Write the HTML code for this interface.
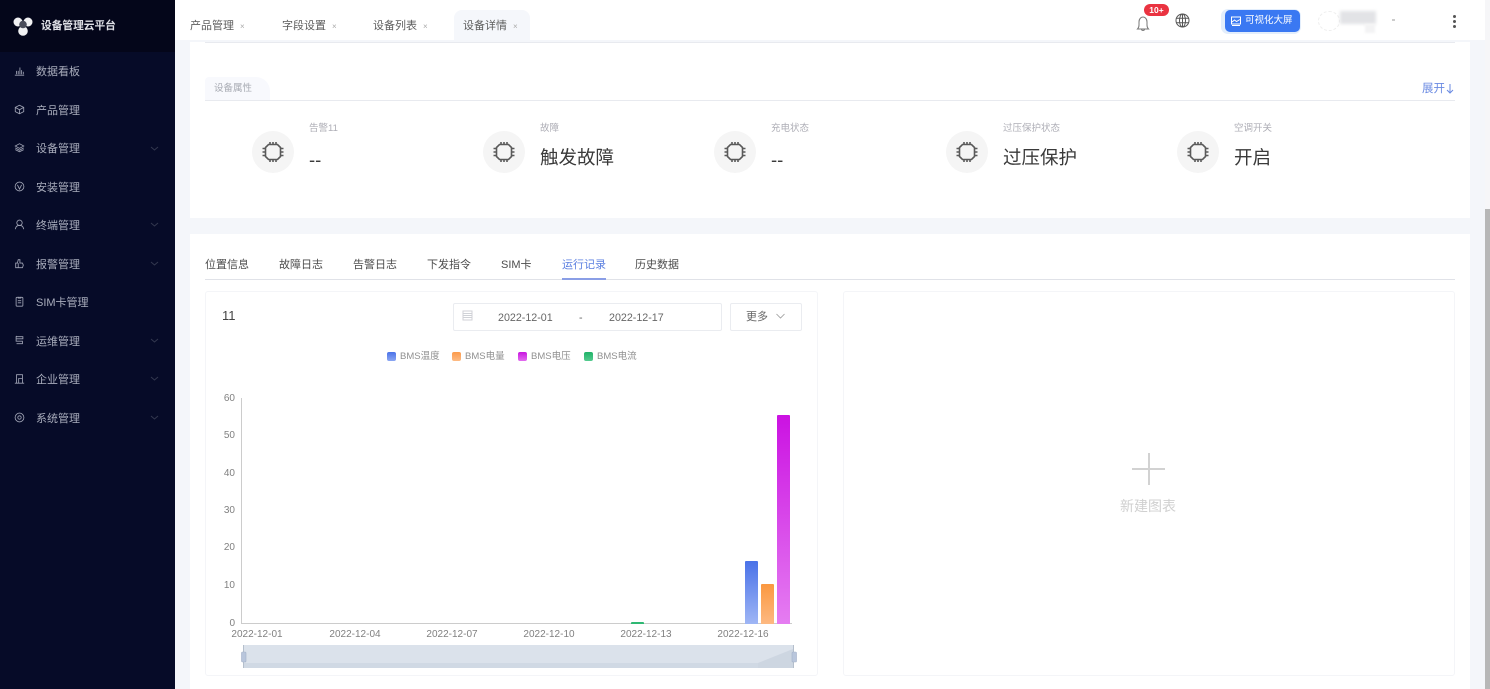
<!DOCTYPE html>
<html lang="zh-CN"><head><meta charset="utf-8"><title>设备管理云平台</title>
<style>
html,body{margin:0;padding:0;width:1490px;height:689px;overflow:hidden;background:#f4f6fa;font-family:"Liberation Sans","Noto Sans CJK SC",sans-serif;color:#333}
.a{position:absolute;white-space:nowrap}
.side{position:absolute;left:0;top:0;width:175px;height:689px;background:#060b28}
.logo{position:absolute;left:0;top:0;width:175px;height:52px;background:#04061a}
.m{position:absolute;left:36px;font-size:11px;line-height:16px;color:#a9adbc}
.ic{position:absolute;left:14px;width:11px;height:11px;fill:none;stroke:#a0a4b5;stroke-width:1}
.ch{position:absolute;left:150px;width:9px;height:5px;fill:none;stroke:#33384f;stroke-width:1}
.tab{position:absolute;top:18px;font-size:11px;line-height:16px;color:#5c5c5c}
.tab i{font-style:normal;font-size:8px;color:#aaa;margin-left:6px}
.sub{position:absolute;top:257px;font-size:11px;line-height:16px;color:#4c4c4c}
.lb{position:absolute;top:123px;font-size:9.5px;line-height:12px;color:#aeaeb6}
.val{position:absolute;top:145px;font-size:18.5px;line-height:26px;color:#3a3a3a}
.dash{top:147px}
.cc{position:absolute;top:131px;width:42px;height:42px;border-radius:50%;background:#f5f5f5}
.cc svg{position:absolute;left:9px;top:9px;width:24px;height:24px;fill:none;stroke:#5a5a5a;stroke-width:1.6}
.y{position:absolute;left:215px;width:20px;text-align:right;font-size:10px;line-height:12px;color:#808080}
.x{position:absolute;top:628px;width:70px;text-align:center;font-size:10px;line-height:13px;color:#808080}
.leg{position:absolute;top:350px;font-size:9.5px;line-height:13px;color:#909090}
.sw{position:absolute;top:352px;width:9px;height:9px;border-radius:2px}
</style></head><body>

<div class="a" style="left:190px;top:42px;width:1280px;height:176px;background:#fff"></div>
<div class="a" style="left:190px;top:234px;width:1280px;height:455px;background:#fff"></div>

<!-- top bar -->
<div class="a" style="left:175px;top:0;width:1310px;height:40px;background:#fff"></div>
<div class="a" style="left:205px;top:42px;width:1250px;height:1px;background:#e8eaef"></div>
<div class="a" style="left:454px;top:10px;width:76px;height:30px;background:#f5f7fb;border-radius:8px 8px 0 0"></div>
<div class="tab" style="left:190px">产品管理<i>×</i></div>
<div class="tab" style="left:282px">字段设置<i>×</i></div>
<div class="tab" style="left:373px">设备列表<i>×</i></div>
<div class="tab" style="left:463px">设备详情<i>×</i></div>

<svg class="a" style="left:1135px;top:14px;width:16px;height:18px;fill:none;stroke:#777;stroke-width:1" viewBox="0 0 16 18"><path d="M2.500 15h11c-1-1-1.500-2-1.500-4V8c0-3-1.800-5-4-5s-4 2-4 5v3c0 2-.5 3-1.500 4zM6.500 15.500c.3 1.200 2.700 1.200 3 0"/></svg>
<div class="a" style="left:1144px;top:4px;width:25px;height:12px;border-radius:6px;background:#ea3341;color:#fff;font-size:8.500px;line-height:12px;text-align:center;font-weight:bold">10+</div>
<svg class="a" style="left:1175px;top:13px;width:15px;height:15px;fill:none;stroke:#555;stroke-width:1" viewBox="0 0 15 15"><circle cx="7.500" cy="7.500" r="6.500"/><ellipse cx="7.500" cy="7.500" rx="3" ry="6.500"/><path d="M1 5.200h13M1 9.800h13M7.500 1v13"/></svg>

<div class="a" style="left:1221px;top:9px;width:80px;height:25px;border-radius:7px;background:#e3eefc"></div>
<div class="a" style="left:1225px;top:10px;width:75px;height:22px;border-radius:5px;background:#3a78f2;color:#fff;font-size:9.500px;line-height:22px;padding-left:20px;box-sizing:border-box">可视化大屏</div>
<svg class="a" style="left:1231px;top:16px;width:10px;height:10px;fill:none;stroke:#fff;stroke-width:1" viewBox="0 0 10 10"><rect x=".5" y="1" width="9" height="7"/><path d="M1 6l2.500-2 2 1.500L9 3.500M1 9.500h8"/></svg>

<div class="a" style="left:1318px;top:11px;width:22px;height:20px;border-radius:50%;border:1px dashed #eee;box-sizing:border-box"></div>
<div class="a" style="left:1340px;top:11px;width:36px;height:13px;background:#e2e3e6;filter:blur(1.500px)"></div>
<div class="a" style="left:1365px;top:24px;width:10px;height:9px;background:#f3f3f4;filter:blur(1px)"></div>
<div class="a" style="left:1392px;top:19px;width:3px;height:2px;background:#ccc"></div>
<div class="a" style="left:1453px;top:15px;width:3px;height:3px;border-radius:50%;background:#555"></div>
<div class="a" style="left:1453px;top:20px;width:3px;height:3px;border-radius:50%;background:#555"></div>
<div class="a" style="left:1453px;top:25px;width:3px;height:3px;border-radius:50%;background:#555"></div>

<!-- scrollbar -->
<div class="a" style="left:1485px;top:0;width:5px;height:689px;background:#f6f6f8"></div>
<div class="a" style="left:1485px;top:209px;width:5px;height:480px;background:#b7b7b7"></div>

<!-- sidebar -->
<div class="side">
<div class="logo"></div>
<svg class="a" style="left:13px;top:17px;width:20px;height:19px" viewBox="0 0 20 19"><circle cx="5" cy="5" r="4.500" fill="#f1f1f3"/><circle cx="15" cy="5" r="4.500" fill="#f1f1f3"/><circle cx="10" cy="14" r="4.800" fill="#f1f1f3"/><circle cx="10" cy="7.500" r="3.800" fill="#4a4c5a"/></svg>
<div class="a" style="left:41px;top:18px;font-size:10.700px;line-height:16px;font-weight:bold;color:#dfe0e6">设备管理云平台</div>

<div class="m" style="top:64px">数据看板</div>
<div class="m" style="top:103px">产品管理</div>
<div class="m" style="top:141px">设备管理</div>
<div class="m" style="top:180px">安装管理</div>
<div class="m" style="top:218px">终端管理</div>
<div class="m" style="top:257px">报警管理</div>
<div class="m" style="top:295px">SIM卡管理</div>
<div class="m" style="top:334px">运维管理</div>
<div class="m" style="top:372px">企业管理</div>
<div class="m" style="top:411px">系统管理</div>

<svg class="ic" style="top:65px" viewBox="0 0 13 13"><path d="M1 12h11M3 11V7M5 11V7M7 11V3M9 11V6M11 11V8"/></svg>
<svg class="ic" style="top:104px" viewBox="0 0 13 13"><path d="M6.500 1.500l5 2.500v5l-5 2.500-5-2.500V4zM1.500 4l5 2.800 5-2.800M6.500 6.800v4.700"/></svg>
<svg class="ic" style="top:142px" viewBox="0 0 13 13"><path d="M6.500 2l5 2.800-5 2.800-5-2.800zM1.500 7l5 2.800 5-2.800M1.500 9l5 2.500 5-2.500"/></svg>
<svg class="ic" style="top:181px" viewBox="0 0 13 13"><circle cx="6.500" cy="6.500" r="5.200"/><path d="M4 4.500l2.500 5 2.500-5"/></svg>
<svg class="ic" style="top:219px" viewBox="0 0 13 13"><circle cx="6.500" cy="4.500" r="3.200"/><path d="M1.500 12c.5-2.800 2.500-4.500 5-4.500s4.500 1.700 5 4.500"/></svg>
<svg class="ic" style="top:258px" viewBox="0 0 13 13"><path d="M2 11.500V6h2l1-4h2v4h3l1 2.500-1 3zM5 6v5.500"/></svg>
<svg class="ic" style="top:296px" viewBox="0 0 13 13"><rect x="2.500" y="1.500" width="8" height="10.500" rx="1"/><path d="M4.500 5.500h4M4.500 8h4M5 1v1.500h3V1"/></svg>
<svg class="ic" style="top:335px" viewBox="0 0 13 13"><path d="M2.500 2h8v2.500h-8zM2.500 4.500v2.800h7.500v3h-7M3 1v1"/></svg>
<svg class="ic" style="top:373px" viewBox="0 0 13 13"><path d="M3 11.500V2h7v4.500H5.500v5M1 12h11M10 6.500v5"/></svg>
<svg class="ic" style="top:412px" viewBox="0 0 13 13"><circle cx="6.500" cy="6.500" r="2"/><circle cx="6.500" cy="6.500" r="5.200"/></svg>

<svg class="ch" style="top:146px" viewBox="0 0 9 5"><path d="M1 1l3.500 3L8 1"/></svg>
<svg class="ch" style="top:222px" viewBox="0 0 9 5"><path d="M1 1l3.500 3L8 1"/></svg>
<svg class="ch" style="top:261px" viewBox="0 0 9 5"><path d="M1 1l3.500 3L8 1"/></svg>
<svg class="ch" style="top:338px" viewBox="0 0 9 5"><path d="M1 1l3.500 3L8 1"/></svg>
<svg class="ch" style="top:376px" viewBox="0 0 9 5"><path d="M1 1l3.500 3L8 1"/></svg>
<svg class="ch" style="top:415px" viewBox="0 0 9 5"><path d="M1 1l3.500 3L8 1"/></svg>
</div>

<!-- attributes -->
<div class="a" style="left:205px;top:77px;width:65px;height:23px;background:#f8f9fd;border-radius:4px 14px 0 0"></div>
<div class="a" style="left:214px;top:82px;font-size:9.500px;line-height:14px;color:#a8abb3">设备属性</div>
<div class="a" style="left:205px;top:100px;width:1250px;height:1px;background:#e8eaef"></div>
<div class="a" style="left:1422px;top:82px;font-size:11.500px;line-height:15px;color:#6a8ae2">展开</div>
<svg class="a" style="left:1446px;top:83px;width:8px;height:11px;fill:none;stroke:#6a8ae2;stroke-width:1" viewBox="0 0 8 11"><path d="M4 1v9M1 7l3 3 3-3"/></svg>

<div class="cc" style="left:252px"><svg viewBox="0 0 24 24"><path d="M7.500 4.500h9l3 3v9l-3 3h-9l-3-3v-9zM9 2v2.500M12 2v2.500M15 2v2.500M9 19.500V22M12 19.500V22M15 19.500V22M1.500 8.500h3M1.500 12h3M1.500 15.500h3M19.500 8.500h3M19.500 12h3M19.500 15.500h3"/></svg></div>
<div class="cc" style="left:483px"><svg viewBox="0 0 24 24"><path d="M7.500 4.500h9l3 3v9l-3 3h-9l-3-3v-9zM9 2v2.500M12 2v2.500M15 2v2.500M9 19.500V22M12 19.500V22M15 19.500V22M1.500 8.500h3M1.500 12h3M1.500 15.500h3M19.500 8.500h3M19.500 12h3M19.500 15.500h3"/></svg></div>
<div class="cc" style="left:714px"><svg viewBox="0 0 24 24"><path d="M7.500 4.500h9l3 3v9l-3 3h-9l-3-3v-9zM9 2v2.500M12 2v2.500M15 2v2.500M9 19.500V22M12 19.500V22M15 19.500V22M1.500 8.500h3M1.500 12h3M1.500 15.500h3M19.500 8.500h3M19.500 12h3M19.500 15.500h3"/></svg></div>
<div class="cc" style="left:946px"><svg viewBox="0 0 24 24"><path d="M7.500 4.500h9l3 3v9l-3 3h-9l-3-3v-9zM9 2v2.500M12 2v2.500M15 2v2.500M9 19.500V22M12 19.500V22M15 19.500V22M1.500 8.500h3M1.500 12h3M1.500 15.500h3M19.500 8.500h3M19.500 12h3M19.500 15.500h3"/></svg></div>
<div class="cc" style="left:1177px"><svg viewBox="0 0 24 24"><path d="M7.500 4.500h9l3 3v9l-3 3h-9l-3-3v-9zM9 2v2.500M12 2v2.500M15 2v2.500M9 19.500V22M12 19.500V22M15 19.500V22M1.500 8.500h3M1.500 12h3M1.500 15.500h3M19.500 8.500h3M19.500 12h3M19.500 15.500h3"/></svg></div>

<div class="lb" style="left:309px">告警11</div><div class="val dash" style="left:309px">--</div>
<div class="lb" style="left:540px">故障</div><div class="val" style="left:540px">触发故障</div>
<div class="lb" style="left:771px">充电状态</div><div class="val dash" style="left:771px">--</div>
<div class="lb" style="left:1003px">过压保护状态</div><div class="val" style="left:1003px">过压保护</div>
<div class="lb" style="left:1234px">空调开关</div><div class="val" style="left:1234px">开启</div>

<!-- sub tabs -->
<div class="sub" style="left:205px">位置信息</div>
<div class="sub" style="left:279px">故障日志</div>
<div class="sub" style="left:353px">告警日志</div>
<div class="sub" style="left:427px">下发指令</div>
<div class="sub" style="left:501px">SIM卡</div>
<div class="sub" style="left:562px;color:#5b7fe0">运行记录</div>
<div class="sub" style="left:635px">历史数据</div>
<div class="a" style="left:205px;top:279px;width:1250px;height:1px;background:#e0e2e8"></div>
<div class="a" style="left:562px;top:278px;width:44px;height:2px;background:#8a9ee6"></div>

<!-- chart card -->
<div class="a" style="left:205px;top:291px;width:613px;height:385px;box-sizing:border-box;border:1px solid #f4f5f8;border-radius:3px"></div>
<div class="a" style="left:843px;top:291px;width:612px;height:385px;box-sizing:border-box;border:1px solid #f4f5f8;border-radius:3px"></div>
<div class="a" style="left:222px;top:308px;font-size:13px;line-height:16px;color:#444">11</div>

<div class="a" style="left:453px;top:303px;width:269px;height:28px;box-sizing:border-box;border:1px solid #eaecf0;border-radius:2px"></div>
<svg class="a" style="left:462px;top:310px;width:11px;height:11px;fill:none;stroke:#d0d2d7;stroke-width:1" viewBox="0 0 11 11"><rect x="1" y="1" width="9" height="9"/><path d="M1 3.500h9M1 5.500h9M1 7.500h9"/></svg>
<div class="a" style="left:498px;top:310px;font-size:10.700px;line-height:16px;color:#666">2022-12-01</div>
<div class="a" style="left:579px;top:310px;font-size:10.700px;line-height:16px;color:#666">-</div>
<div class="a" style="left:609px;top:310px;font-size:10.700px;line-height:16px;color:#666">2022-12-17</div>
<div class="a" style="left:730px;top:303px;width:72px;height:28px;box-sizing:border-box;border:1px solid #eaecf0;border-radius:2px"></div>
<div class="a" style="left:746px;top:309px;font-size:11px;line-height:16px;color:#666">更多</div>
<svg class="a" style="left:776px;top:313px;width:9px;height:6px;fill:none;stroke:#999;stroke-width:.8" viewBox="0 0 9 6"><path d="M.5 1l4 4 4-4"/></svg>

<!-- legend -->
<div class="sw" style="left:387px;background:linear-gradient(#4a72e8,#8ba6f2)"></div><div class="leg" style="left:400px">BMS温度</div>
<div class="sw" style="left:452px;background:linear-gradient(#fb9a4b,#fdbb84)"></div><div class="leg" style="left:465px">BMS电量</div>
<div class="sw" style="left:518px;background:linear-gradient(#c816e0,#e26cef)"></div><div class="leg" style="left:531px">BMS电压</div>
<div class="sw" style="left:584px;background:linear-gradient(#1fb267,#55cb8f)"></div><div class="leg" style="left:597px">BMS电流</div>

<!-- axes -->
<div class="y" style="top:393px">60</div>
<div class="y" style="top:430px">50</div>
<div class="y" style="top:468px">40</div>
<div class="y" style="top:505px">30</div>
<div class="y" style="top:542px">20</div>
<div class="y" style="top:580px">10</div>
<div class="y" style="top:618px">0</div>
<div class="a" style="left:241px;top:398px;width:1px;height:226px;background:#ccc"></div>
<div class="a" style="left:241px;top:623px;width:551px;height:1px;background:#ccc"></div>
<div class="x" style="left:222px">2022-12-01</div>
<div class="x" style="left:320px">2022-12-04</div>
<div class="x" style="left:417px">2022-12-07</div>
<div class="x" style="left:514px">2022-12-10</div>
<div class="x" style="left:611px">2022-12-13</div>
<div class="x" style="left:708px">2022-12-16</div>

<!-- bars -->
<div class="a" style="left:631px;top:622px;width:13px;height:2px;background:#2fb873;border-radius:1px 1px 0 0"></div>
<div class="a" style="left:745px;top:561px;width:13px;height:63px;background:linear-gradient(#4a72e8,#9fb6f5);border-radius:1px 1px 0 0"></div>
<div class="a" style="left:761px;top:584px;width:13px;height:40px;background:linear-gradient(#fb9840,#fdb982);border-radius:1px 1px 0 0"></div>
<div class="a" style="left:777px;top:415px;width:13px;height:209px;background:linear-gradient(#cb12e2,#e57df1);border-radius:1px 1px 0 0"></div>

<!-- datazoom -->
<svg class="a" style="left:240px;top:644px;width:560px;height:26px" viewBox="0 0 560 26">
<rect x="3" y="1" width="550" height="23" fill="#dbe2eb"/>
<rect x="3" y="19" width="550" height="5" fill="#d0d9e4"/>
<path d="M518 19L553 5V24H518z" fill="#cdd6e1"/>
<path d="M3.500 1v23M553.500 1v23" stroke="#b5bfcc" stroke-width="1"/>
<rect x="1.500" y="8" width="4.500" height="10" rx="1" fill="#b9c6dc" stroke="#a3b1c8" stroke-width=".6"/>
<rect x="552" y="8" width="4.500" height="10" rx="1" fill="#b9c6dc" stroke="#a3b1c8" stroke-width=".6"/>
</svg>

<!-- new chart -->
<div class="a" style="left:1132px;top:468px;width:33px;height:2px;background:#d2d2d2"></div>
<div class="a" style="left:1148px;top:453px;width:2px;height:32px;background:#d2d2d2"></div>
<div class="a" style="left:1120px;top:497px;font-size:14px;line-height:18px;color:#d0d0d0">新建图表</div>

</body></html>
